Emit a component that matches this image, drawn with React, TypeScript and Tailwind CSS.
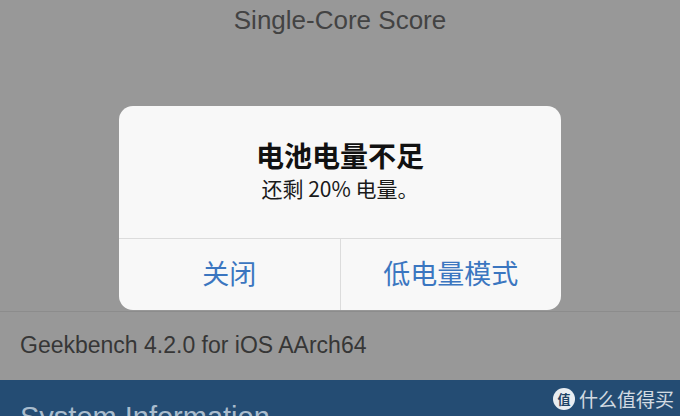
const sans = "font-['Liberation_Sans','Noto_Sans_CJK_SC',sans-serif]";
const cjk = "font-['Noto_Sans_CJK_SC','Liberation_Sans',sans-serif]";

function Alert() {
  return (
    <div className="absolute inset-0 flex items-center justify-center">
      <div className={`w-[442px] h-[204px] rounded-[14px] bg-[#f8f8f8] flex flex-col overflow-hidden ${cjk}`}>
        <div className="h-[133px] shrink-0 flex flex-col items-center pt-[31px] border-b border-[#dcdcdc]">
          <div className="text-[28px] leading-[36px] font-bold text-[#111]">电池电量不足</div>
          <div className="mt-[1px] text-[21px] leading-[28px] text-[#1a1a1a]">还剩 20% 电量。</div>
        </div>
        <div className="flex-1 flex">
          <button className="flex-1 flex items-center justify-center pb-[2px] text-[27px] text-[#3b76c0] border-r border-[#dcdcdc]">
            关闭
          </button>
          <button className="flex-1 flex items-center justify-center pb-[2px] text-[27px] text-[#3b76c0]">
            低电量模式
          </button>
        </div>
      </div>
    </div>
  );
}

function Watermark() {
  return (
    <div className={`absolute right-[6px] bottom-[6px] flex items-center gap-[4px] ${cjk}`}>
      <span className="w-[22px] h-[22px] rounded-full bg-white/90 flex items-center justify-center text-[13px] font-bold text-[#1f4466]">
        值
      </span>
      <span className="text-[19px] leading-[22px] text-white/80">什么值得买</span>
    </div>
  );
}

export default function App() {
  return (
    <div className={`relative w-[680px] h-[416px] overflow-hidden bg-[#989898] flex flex-col ${sans}`}>
      <div className="h-[312px] shrink-0 border-b border-[#8c8c8c] flex justify-center pt-[4px]">
        <div className="text-[26px] leading-[32px] text-[#434343]">Single-Core Score</div>
      </div>
      <div className="h-[68px] shrink-0 flex items-center px-[20px] pb-[2px]">
        <span className="text-[23px] text-[#363636]">Geekbench 4.2.0 for iOS AArch64</span>
      </div>
      <div className="h-[60px] shrink-0 bg-[#244c73] px-[20px] pt-[20px]">
        <span className="text-[29px] leading-[34px] text-[#a9bccd]">System Information</span>
      </div>
      <Alert />
      <Watermark />
    </div>
  );
}
